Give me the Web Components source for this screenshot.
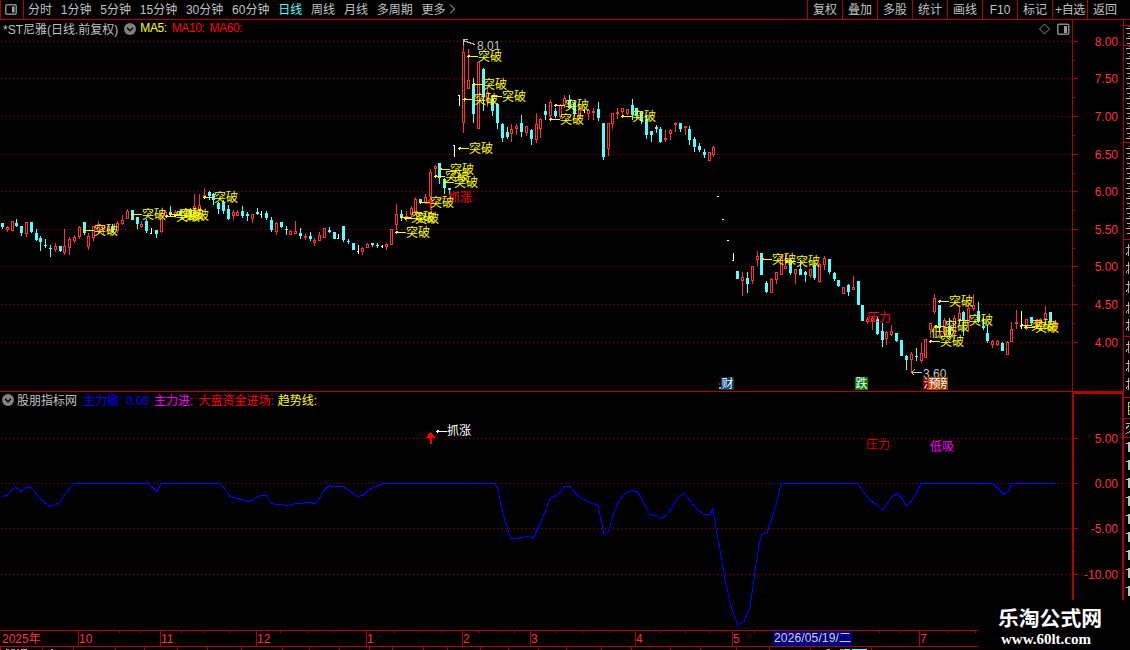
<!DOCTYPE html>
<html lang="zh-CN">
<head>
<meta charset="utf-8">
<title>*ST尼雅</title>
<style>
  html, body {
    margin: 0;
    background: #000;
    overflow: hidden;
  }

  body {
    width: 1130px;
    height: 650px;
    font: 12px "Liberation Sans", "Noto Sans CJK SC", sans-serif;
    color: #c0c0c0;
  }
</style>
</head>
<body>
<stock-app></stock-app>

<script>
const RED = '#b00000';

// x, high, body top, body bottom, low
const UP = `7 226 227 229 231|12 221 221 230 230|26 222 222 233 236|55 243 246 249 251|64 229 246 252 254|69 237 239 247 254
74 235 237 240 242|79 226 227 236 238|88 233 236 246 249|93 226 226 237 240|98 221 224 230 233|103 225 225 229 233
108 224 226 230 232|117 221 223 230 232|122 215 220 223 224|127 209 211 218 218|141 221 224 226 227|161 212 215 231 232
165 211 212 215 216|175 210 212 215 217|185 208 210 214 216|194 194 206 214 216|199 194 205 210 210|204 188 195 197 198
233 210 212 215 219|237 210 212 215 215|252 214 214 218 222|276 222 223 231 234|290 230 231 234 234|295 221 231 233 233
305 234 236 237 239|314 238 240 242 245|319 232 235 240 240|324 228 228 237 237|362 247 248 251 254|367 243 244 247 247
386 243 244 246 249|391 229 229 244 244|396 204 214 224 229|406 211 216 218 221|411 206 208 214 218|415 197 199 211 213
425 194 197 202 203|430 169 172 196 198|435 165 166 168 174|463 42 52 122 132|468 49 80 88 88|478 62 62 128 128
487 88 92 101 106|511 124 129 133 141|516 124 126 128 134|526 126 126 132 135|536 113 124 139 142|540 118 119 128 137
550 100 102 115 118|560 104 105 116 118|564 95 98 104 107|579 106 109 116 118|588 109 110 113 119|593 108 111 112 119
608 123 123 148 155|612 113 113 123 128|617 108 112 113 118|622 108 108 111 114|627 109 109 113 114|665 130 138 139 141
670 129 130 133 139|675 122 123 124 131|685 126 126 127 134|709 152 152 160 160|713 146 147 154 156|742 272 277 280 295
752 266 266 280 283|757 251 256 259 265|771 278 279 292 292|776 272 272 279 283|781 255 258 274 274|785 254 266 268 268
795 269 269 273 283|810 269 269 275 277|819 263 264 281 282|824 256 258 264 269|843 287 287 293 293|853 276 287 289 289
867 317 319 321 323|872 316 318 320 329|886 331 332 338 344|891 325 331 334 335|911 352 354 359 371|921 343 353 360 362
925 339 339 357 357|930 323 323 329 337|934 294 298 311 313|944 318 320 333 335|954 315 318 333 335|959 306 313 320 323
968 305 308 322 330|973 294 305 308 310|992 340 341 344 347|997 340 341 344 345|1007 341 342 354 354|1011 322 329 341 341
1016 310 322 323 328|1026 319 319 328 329|1036 320 321 325 327|1040 318 319 325 327|1045 306 313 318 323|1055 320 322 327 328`;
const DOWN = `2 223 223 226 228|16 219 223 225 226|21 226 226 232 235|31 222 222 231 232|36 229 233 239 240|40 236 238 241 250
45 239 245 245 247|50 245 248 248 256|60 246 246 250 251|84 222 222 232 234|112 224 227 231 232|132 210 210 219 219
137 217 217 223 228|146 219 221 230 232|156 230 230 233 237|170 206 212 213 213|180 209 211 214 215|190 208 210 214 216
209 191 192 195 199|213 193 194 199 204|218 202 203 208 213|223 200 202 210 213|228 205 209 218 219|242 206 211 215 217
247 212 214 215 220|257 208 212 213 214|266 211 213 217 219|271 217 220 229 231|281 222 222 226 227
286 226 229 229 234|300 228 233 235 238|310 232 236 238 240|329 227 230 231 232|334 232 232 238 238|343 226 226 239 241
348 239 241 241 243|353 243 243 249 249|372 243 243 244 246|377 243 245 245 247|401 210 214 216 220|420 199 199 202 203
439 163 163 177 183|444 178 179 187 193|449 188 188 189 193|473 78 84 113 122|483 68 69 96 110|492 96 99 110 115
497 103 104 122 128|502 123 124 137 141|507 127 132 136 138|521 115 123 131 136|531 129 130 138 144|545 104 111 114 119
555 108 111 115 117|569 95 100 107 108|574 100 103 113 115|598 102 109 117 120|603 123 123 156 159|632 99 105 114 119
636 108 108 115 118|641 111 112 120 123|646 116 119 134 138|651 131 131 134 141|656 125 127 128 132|660 127 129 141 142
680 123 123 128 131|689 126 129 139 144|694 137 139 146 151|699 143 146 149 151|704 149 152 154 157|737 271 271 278 278
747 272 278 283 292|761 253 253 274 274|766 281 283 291 292|790 258 260 272 274|800 260 269 274 274|805 271 272 274 281
814 263 265 277 279|829 259 259 271 273|834 272 273 278 280|838 280 280 285 286|848 284 285 291 295|858 281 281 304 304
862 305 305 320 320|877 317 319 333 334|882 323 331 339 346|896 333 333 340 341|901 340 340 355 355|906 355 356 359 369
916 348 356 356 360|939 305 305 327 331|949 318 326 334 337|963 311 312 320 335|978 302 311 320 322|983 318 326 327 329
987 325 333 340 342|1002 342 343 350 350|1031 317 317 322 325|1050 312 312 321 323`;
// x, top, bottom, y of the closing tick
const FLAT = `151 228 233 233|261 211 217 214|338 234 238 238|358 245 253 251|382 245 247 246|454 145 156 145
459 95 105 95|584 109 112 110|718 196 196 196|723 219 219 219|728 240 240 240|733 253 260 260|1021 311 328 326`;

const BREAKS = [
  [83, 230], [131, 214], [165, 216], [169, 214], [174, 215], [203, 197],
  [395, 232], [400, 217], [404, 218], [419, 202], [434, 176], [439, 169],
  [443, 182], [458, 148], [467, 56], [472, 84], [463, 99], [491, 96],
  [549, 119], [554, 105], [621, 116], [761, 259], [785, 261], [938, 301],
  [934, 326], [929, 341], [958, 320], [1020, 325], [1024, 327]
];

const TREND = `2,497 7,496 12,490 16,488 21,492 26,488 31,488 36,494 40,499 45,503 50,507 55,505 60,503 64,496 69,490 74,484
148,484 152,487 157,492 161,484 219,484 223,487 228,495 233,498 238,499 247,502 252,501 258,497 261,496 266,496 271,504
276,505 290,506 295,504 300,504 310,503 315,504 320,498 324,491 329,486 334,487 343,487 348,490 353,494 358,497 363,496
368,491 375,487 384,484 495,484 498,490 501,506 506,525 511,539 516,539 522,538 528,537 533,539 540,525 546,510 550,499
555,497 560,493 564,487 570,487 574,492 580,498 590,503 598,506 601,520 604,534 608,533 613,516 618,503 625,494 632,491
638,493 645,506 650,515 656,516 660,519 665,517 671,510 678,498 684,494 690,501 697,510 704,515 710,515 713,509 719,545
725,580 731,607 738,626 744,622 750,607 754,580 759,545 762,535 767,533 772,518 777,502 781,484 858,484 864,493 870,501
878,506 882,511 888,503 892,497 897,494 902,499 906,506 911,502 916,494 921,484 993,484 998,489 1004,495 1008,492 1012,484 1055,484`;

const rows = (text) => text.split(/[|\n]/).map((r) => r.trim().split(' ').map(Number));

const box = (x, y, w, h, fill) => `<rect x="${x}" y="${y}" width="${w}" height="${h}" fill="${fill}"/>`;

const label = (x, y, text, fill, extra = '') => `<text x="${x}" y="${y}" fill="${fill}" ${extra}>${text}</text>`;

const arrow = (x, y, color) =>
  box(x, y, 11, 1, color) + box(x + 1, y - 1, 1, 3, color) + box(x + 2, y - 1, 1, 1, color);

const dots = (ys) => ys.map((y) =>
  `<path d="M1 ${y + 0.5}H1072" stroke="#b00000" stroke-dasharray="1 3"/>`).join('');

const upMark = (x, y) => `<path d="M${x + 0.5} ${y}l5 6h-4v6h-2v-6h-4z" fill="#f00"/>`;

const chartStyle = `
  :host { display: block; }
  svg { display: block; shape-rendering: crispEdges; }
  text { font: 12px "Liberation Sans", "Noto Sans CJK SC", sans-serif; }
`;

class BaseElement extends HTMLElement {
  constructor() {
    super();
    this.attachShadow({ mode: 'open' });
  }

  connectedCallback() {
    this.shadowRoot.innerHTML = this.render();
  }
}

class ToolButton extends BaseElement {
  render() {
    return `
      <style>
        :host {
          display: flex;
          align-items: center;
          justify-content: center;
          flex: none;
          width: 35px;
          height: 19px;
          padding-top: 1px;
          box-sizing: border-box;
          border-left: 1px solid ${RED};
          white-space: nowrap;
        }
      </style>
      <slot></slot>`;
  }
}

class PeriodTab extends BaseElement {
  render() {
    return `
      <style>
        :host { display: block; white-space: nowrap; }
        :host([active]) { color: #54ffff; }
      </style>
      <slot></slot>`;
  }
}

class TopBar extends BaseElement {
  render() {
    const periods = ['分时', '1分钟', '5分钟', '15分钟', '30分钟', '60分钟', '日线', '周线', '月线', '多周期', '更多'];
    const tools = ['复权', '叠加', '多股', '统计', '画线', 'F10', '标记', '+自选', '返回'];
    return `
      <style>
        :host {
          display: flex;
          height: 19px;
          line-height: 19px;
          border-bottom: 1px solid ${RED};
        }
        .menu {
          display: flex;
          align-items: center;
          width: 24px;
          padding-left: 4px;
          box-sizing: border-box;
          border: solid ${RED};
          border-width: 0 1px;
        }
        .periods { display: flex; flex: 1; gap: 8.8px; padding: 1px 0 0 4px; height: 18px; }
        .more { margin: 3px 0 0 -5px; }
        .tools { display: flex; width: 323px; }
        tool-button:nth-child(8) { letter-spacing: -0.3px; }
      </style>
      <div class="menu">
        <svg width="12" height="11"><rect x=".75" y=".75" width="10.5" height="9.5" rx="1.5" fill="none" stroke="#888" stroke-width="1.5"/><rect x="7" y="2.5" width="2.5" height="6" fill="#aaa"/></svg>
      </div>
      <div class="periods">
        ${periods.map((p) => `<period-tab ${p === '日线' ? 'active' : ''}>${p}</period-tab>`).join('')}
        <svg class="more" width="7" height="10"><path d="M1 .5l4.500 4.500L1 9.500" fill="none" stroke="#c0c0c0"/></svg>
      </div>
      <div class="tools">${tools.map((t) => `<tool-button>${t}</tool-button>`).join('')}</div>`;
  }
}

class PaneTitle extends BaseElement {
  render() {
    return `
      <style>
        :host { display: flex; align-items: center; height: 18px; white-space: nowrap; }
        svg { flex: none; }
        ::slotted(span) { position: relative; top: -1px; }
      </style>
      <slot name="before"></slot>
      <svg width="12" height="12"><circle cx="6" cy="6" r="6" fill="#808080"/><path d="M3 4.800l3 3l3-3" fill="none" stroke="#000" stroke-width="1.400"/></svg>
      <slot></slot>`;
  }
}

class PriceChart extends BaseElement {
  candles() {
    let out = '';
    rows(UP).forEach(([x, h, t, b, l]) => {
      out += box(x, h, 1, l - h + 1, '#ff3232') + box(x - 1, t, 3, b - t + 1, '#ff3232');
      if (b - t > 1) out += box(x, t + 1, 1, b - t - 1, '#000');
    });
    rows(DOWN).forEach(([x, h, t, b, l]) => {
      out += box(x, h, 1, l - h + 1, '#54ffff') + box(x - 1, t, 3, b - t + 1, '#54ffff');
    });
    rows(FLAT).forEach(([x, t, b, tick]) => {
      out += box(x, t, 1, b - t + 1, '#fff') + box(x - 1, tick, 1, 1, '#fff');
    });
    return out;
  }

  badge(x, text, fill) {
    return `<rect x="${x}" y="377" width="13" height="13" rx="1" fill="${fill}"/>` + label(x + 0.5, 388, text, '#fff');
  }

  render() {
    return `
      <style>${chartStyle}</style>
      <svg width="1072" height="371" viewBox="0 20 1072 371">
        ${dots([41, 78, 116, 154, 191, 229, 266, 304, 342])}
        ${this.candles()}
        ${upMark(430, 198)}
        ${arrow(438, 198, '#f00')}${label(448, 202, '抓涨', '#f00')}
        ${BREAKS.map(([x, y]) => arrow(x, y, '#ff0') + label(x + 11, y + 4.6, '突破', '#ff0')).join('')}
        ${label(931, 337, '低吸', '#ff0')}
        ${label(867, 322, '压力', '#f00')}
        <path d="M463 40.500L475 44.500M467.500 39.500H463.500V45" fill="none" stroke="#c0c0c0"/>
        ${label(477, 50, '8.01', '#c0c0c0')}
        <path d="M911 372.500H922M914.500 369.500l-3 3l3 3" fill="none" stroke="#c0c0c0"/>
        ${label(923, 378, '3.60', '#c0c0c0')}
        ${box(719, 383, 1, 2, '#f00')}${box(719, 387, 2, 2, '#0ff')}
        ${this.badge(721, '财', '#003868')}
        ${this.badge(855, '跌', '#008000')}
        ${this.badge(923, '涉', '#800000')}
        ${this.badge(935, '榜', '#804000')}
        ${this.badge(928, '预', '#c04000')}
      </svg>`;
  }
}

class TrendChart extends BaseElement {
  render() {
    return `
      <style>${chartStyle}</style>
      <svg width="1072" height="238" viewBox="0 392 1072 238">
        ${dots([438, 483, 528, 574])}
        <polyline points="${TREND}" transform="translate(0 -.5)" fill="none" stroke="#00f"/>
        ${upMark(430, 432)}
        ${arrow(436, 431, '#fff')}${label(447, 435, '抓涨', '#fff')}
        ${label(866, 449, '压力', '#d00000')}
        ${label(930, 451, '低吸', '#f0f')}
      </svg>`;
  }
}

class ValueAxis extends BaseElement {
  render() {
    const thick = this.hasAttribute('thick');
    const top = Number(this.getAttribute('top'));
    const height = Number(this.getAttribute('height'));
    const ticks = this.getAttribute('ticks').split(' ').map((t) => t.split('='));
    const minors = this.getAttribute('minors').split(' ').map(Number);
    const frame = thick
      ? `<path d="M1073 ${top + height}V392M1073 393H1123M1123 392V${top + height}" fill="none" stroke="${RED}" stroke-width="2"/>`
      : box(1072, top, 1, height, RED) + box(1123, top, 1, height, RED);
    return `
      <style>${chartStyle}</style>
      <svg width="52" height="${height}" viewBox="1072 ${top} 52 ${height}">
        ${frame}
        ${ticks.map(([y, v]) => box(1073, y, 5, 1, RED) + label(1118, Number(y) + 5, v, '#ff3232', 'text-anchor="end"')).join('')}
        ${minors.map((y) => box(1073, y, 2, 1, RED)).join('')}
      </svg>`;
  }
}

class TimeAxis extends BaseElement {
  render() {
    const months = [[78, '10'], [160, '11'], [256, '12'], [366, '1'], [462, '2'], [530, '3'], [635, '4'], [732, '5'], [919, '7']];
    const minors = [99, 119, 140, 181, 204, 229, 280, 307, 334, 394, 417, 441, 479, 497, 514, 556, 582, 609, 660, 685, 709, 754, 879, 900, 947, 975];
    const lower = [0, 42, 73, 115, 144, 177, 207, 241, 282, 309, 339, 369, 392, 423, 447, 480, 508, 538, 566, 601, 631, 670, 700, 736, 769, 810, 871];
    return `
      <style>${chartStyle}</style>
      <svg width="978" height="20" viewBox="0 630 978 20">
        ${box(0, 630, 978, 1, RED)}${box(0, 646, 978, 1, RED)}
        ${minors.map((x) => box(x, 631, 1, 2, RED)).join('')}
        ${lower.map((x) => box(x, 647, 1, 3, RED)).join('')}
        ${label(2, 643, '2025年', '#ff3232')}
        ${months.map(([x, m]) => box(x, 631, 1, 15, RED) + label(x + 1, 643, m, '#ff3232')).join('')}
        ${box(773, 631, 79, 15, '#000080')}
        ${label(774, 642, '2026/05/19/二', '#d0d0d0', 'textLength="77"')}
        <path d="M6 649.500h3m2 0h4m2 0h2m2 0h6M51 649.500h2M827 649.500h3m10 0h3" stroke="#aaa"/>
        <path d="M844 649.500h6m2 0h15" stroke="#54ffff" stroke-width="2"/>
      </svg>`;
  }
}

// Left edge of the neighbouring quote panel
class QuoteEdge extends BaseElement {
  render() {
    let marks = '';
    for (let y = 28; y < 238; y += 5) {
      if (Math.abs(y - 45) < 2 || Math.abs(y - 142) < 2) continue;
      marks += y % 10 < 5 ? `M1127 ${y + 0.5}h3` : `M1126 ${y + 0.5}h4M1129 ${y - 1.5}h1`;
    }
    const glyphs = [244, 262, 281, 302, 319, 341, 360, 378].map((y) =>
      `M1126 ${y + 3.5}h4M1128.500 ${y}v12M1126 ${y + 10.5}l3-4`).join('');
    let ones = '';
    for (let y = 442; y < 600; y += 18) ones += box(1126, y + 1, 2, 1, '#c0c0c0') + box(1128, y, 2, 10, '#c0c0c0');
    return `
      <style>${chartStyle}</style>
      <svg width="6" height="630" viewBox="1124 20 6 630">
        ${[25, 45, 142, 239, 336, 397, 418, 437].map((y) => box(1124, y, 6, 1, RED)).join('')}
        <path d="${marks}${glyphs}M1126 423.500h4m-4 5l3-3m-3 8l4-2" fill="none" stroke="#b0b0b0"/>
        <path d="M1130 402.500h-1.500v12h1.500M1129 406.500h1M1129 410.500h1" fill="none" stroke="#c8c800"/>
        ${ones}
      </svg>`;
  }
}

class SiteMark extends BaseElement {
  render() {
    return `
      <style>
        :host {
          position: absolute;
          right: 0;
          bottom: 0;
          width: 152px;
          height: 50px;
          padding: 6px 0 0 20px;
          box-sizing: border-box;
          background: #000;
          color: #fff;
          font-weight: bold;
          white-space: nowrap;
        }
        .name { font-size: 20.8px; line-height: 26px; }
        .url { font: bold 15px/15px "Liberation Serif", serif; padding-left: 3px; }
      </style>
      <div class="name">乐淘公式网</div>
      <div class="url">www.60lt.com</div>`;
  }
}

class StockApp extends BaseElement {
  render() {
    return `
      <style>
        :host { display: block; position: relative; width: 1130px; height: 650px; overflow: hidden; }
        .main { display: flex; }
        .charts { width: 1072px; }
        .pane { position: relative; border-bottom: 1px solid ${RED}; }
        .trend { border-bottom: none; }
        .scales { width: 52px; }
        .gap { height: 1px; background: ${RED}; }
        pane-title { position: absolute; left: 3px; top: 0; z-index: 1; }
        .trend pane-title { left: 2px; top: -1px; }
        .icons { position: absolute; right: 2px; top: 3px; }
        .m { letter-spacing: -0.4px; }
      </style>
      <top-bar></top-bar>
      <div class="main">
        <div class="charts">
          <div class="pane">
            <pane-title>
              <span slot="before" style="margin-right:6px">*ST尼雅(日线.前复权)</span>
              <span class="m" style="color:#ff0;margin-left:4px">MA5:</span>
              <span class="m" style="color:#f00;margin-left:5px">MA10:</span>
              <span class="m" style="color:#f00;margin-left:5px">MA60:</span>
            </pane-title>
            <svg class="icons" width="31" height="12"><path d="M5.500 1l5 5l-5 5l-5-5z" fill="none" stroke="#888"/><rect x="18.750" y="1.250" width="11" height="10" rx="1" fill="none" stroke="#888" stroke-width="1.500"/><rect x="25" y="3" width="3" height="7" fill="#999"/></svg>
            <price-chart></price-chart>
          </div>
          <div class="pane trend">
            <pane-title>
              <span style="margin-left:3px">股朋指标网</span>
              <span style="color:#00f;margin-left:6px">主力撤: 0.00</span>
              <span style="color:#f0f;margin-left:5px">主力进:</span>
              <span style="color:#f00;margin-left:5px">大盘资金进场:</span>
              <span style="color:#ff0;margin-left:4px">趋势线:</span>
            </pane-title>
            <trend-chart></trend-chart>
          </div>
          <time-axis></time-axis>
        </div>
        <div class="scales">
          <value-axis top="20" height="371"
            ticks="41=8.00 78=7.50 116=7.00 154=6.50 191=6.00 229=5.50 266=5.00 304=4.50 342=4.00"
            minors="60 97 135 173 210 248 285 323"></value-axis>
          <div class="gap"></div>
          <value-axis thick top="392" height="238"
            ticks="438=5.00 483=0.00 528=-5.00 574=-10.00" minors="461 506 551"></value-axis>
        </div>
        <quote-edge></quote-edge>
      </div>
      <site-mark></site-mark>`;
  }
}

customElements.define('tool-button', ToolButton);
customElements.define('period-tab', PeriodTab);
customElements.define('top-bar', TopBar);
customElements.define('pane-title', PaneTitle);
customElements.define('price-chart', PriceChart);
customElements.define('trend-chart', TrendChart);
customElements.define('value-axis', ValueAxis);
customElements.define('time-axis', TimeAxis);
customElements.define('quote-edge', QuoteEdge);
customElements.define('site-mark', SiteMark);
customElements.define('stock-app', StockApp);
</script>
</body>
</html>
